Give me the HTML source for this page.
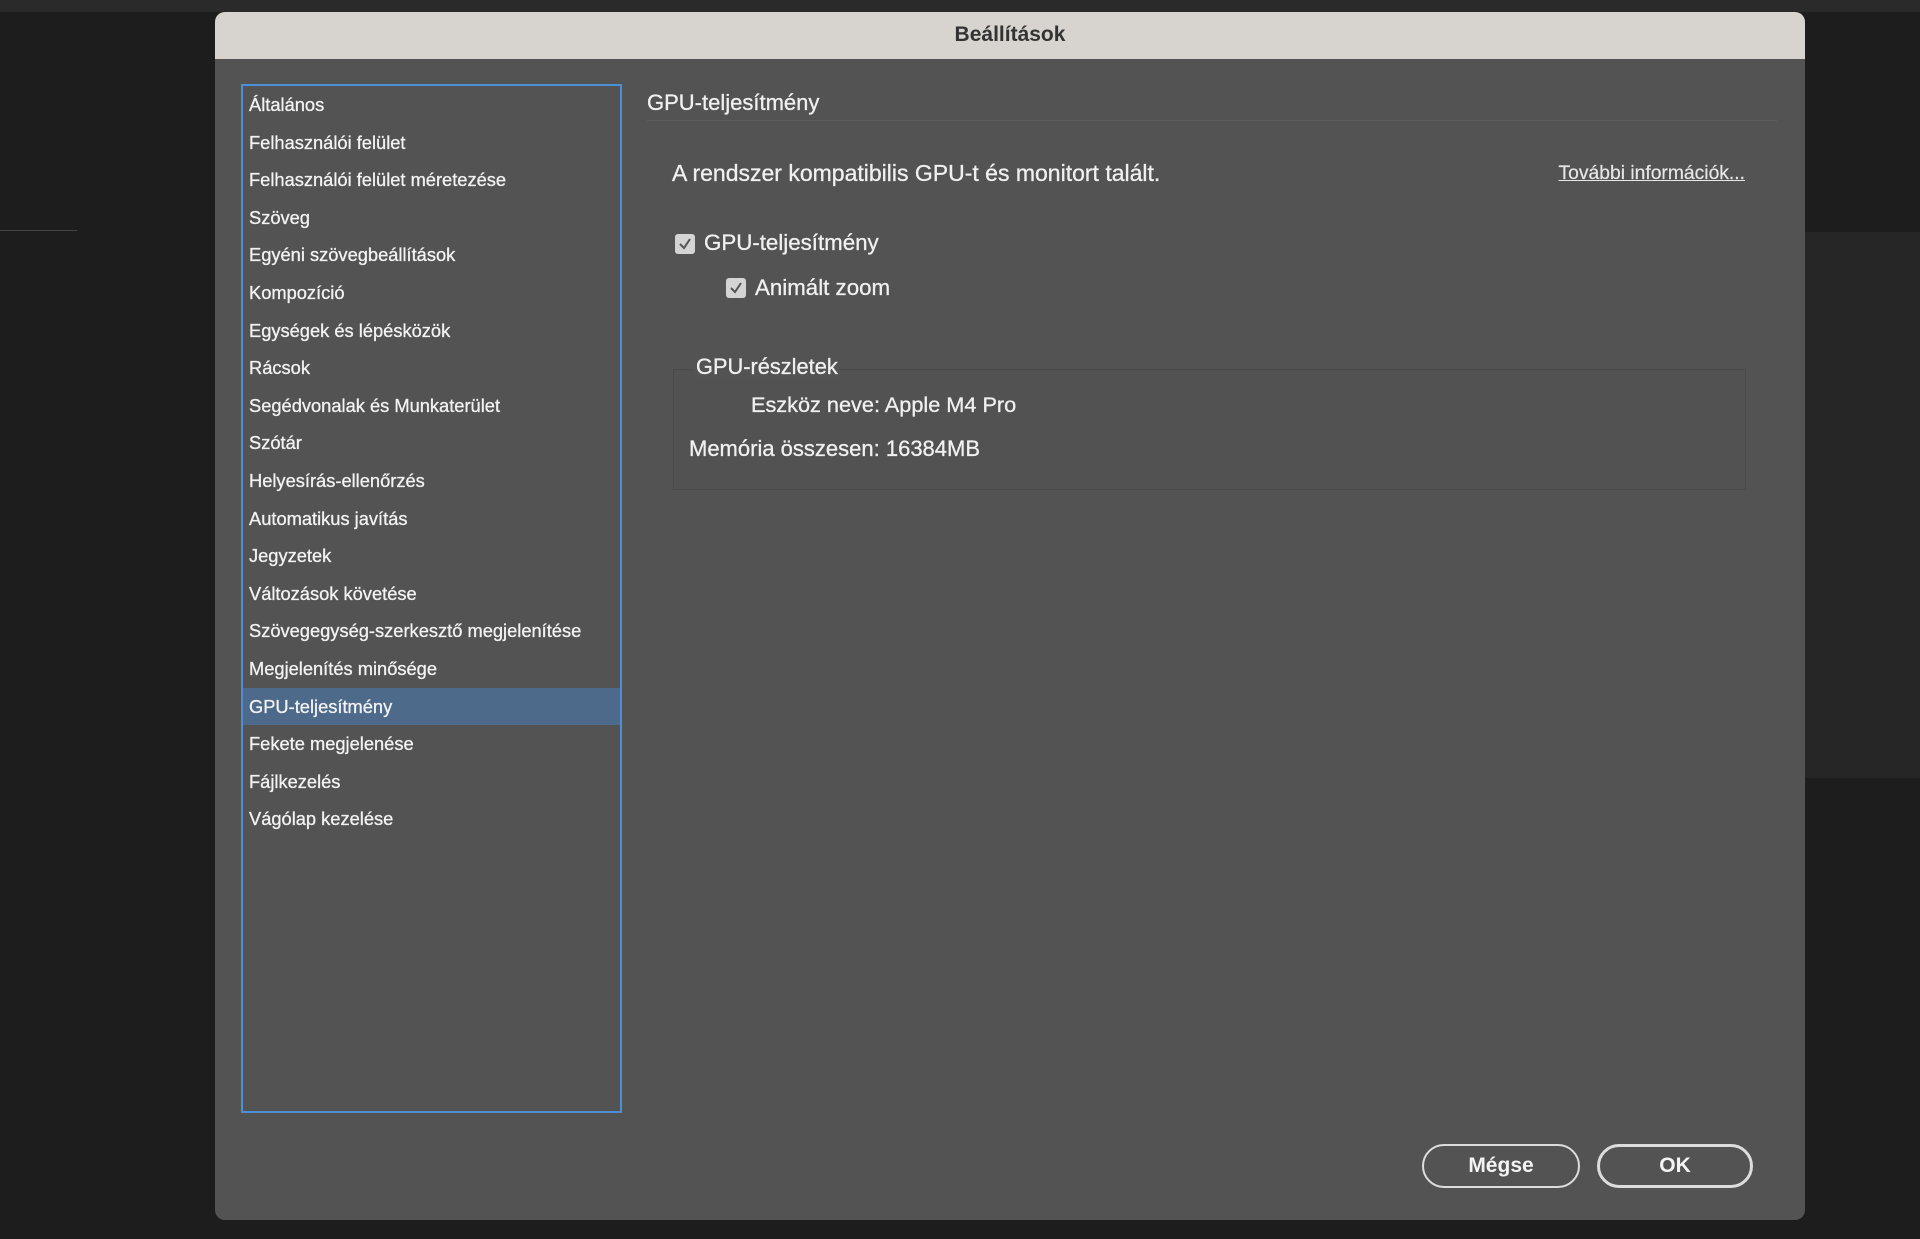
<!DOCTYPE html>
<html><head><meta charset="utf-8">
<style>
*{margin:0;padding:0;box-sizing:border-box}
body{width:1920px;height:1239px;background:#1d1d1d;font-family:"Liberation Sans",sans-serif;position:relative;overflow:hidden;color:#f0f0f0}
.abs{position:absolute}
.dlg{left:215px;top:12px;width:1590px;height:1208px;background:#535353;border-radius:10px;overflow:hidden}
.title{left:0;top:0;width:1590px;height:47px;background:#d7d3ce;color:#333;font-weight:bold;font-size:21px;text-align:center;line-height:46px}
.list{left:26px;top:72px;width:381px;height:1029px;border:2px solid #4d8fd6}
.item{position:absolute;left:0;width:377px;height:37px;line-height:37px;padding-left:6px;font-size:18.3px;color:#f2f2f2;-webkit-text-stroke:0.3px #f2f2f2}
.sel{background:#4d6a8a}
.t{position:absolute;white-space:nowrap;-webkit-text-stroke:0.3px #f0f0f0}
.cb{position:absolute;width:20px;height:20px;background:#d4d4d4;border-radius:3px}
.btn{position:absolute;top:1132px;height:44px;border:2px solid #ddd;border-radius:22px;text-align:center;line-height:40px;font-size:21px;font-weight:bold;color:#f4f4f4}
</style></head><body>
<div class="abs" style="left:0;top:0;width:1920px;height:12px;background:#2a2a2a"></div>
<div class="abs" style="left:0;top:230px;width:77px;height:1px;background:#444"></div>
<div class="abs" style="left:1805px;top:232px;width:115px;height:546px;background:#262626"></div>
<div class="abs dlg">
<div class="abs title">Beállítások</div>
<div class="abs list">
<div class="item" style="top:0">Általános</div>
<div class="item" style="top:37.6px">Felhasználói felület</div>
<div class="item" style="top:75.2px">Felhasználói felület méretezése</div>
<div class="item" style="top:112.8px">Szöveg</div>
<div class="item" style="top:150.4px">Egyéni szövegbeállítások</div>
<div class="item" style="top:188px">Kompozíció</div>
<div class="item" style="top:225.6px">Egységek és lépésközök</div>
<div class="item" style="top:263.2px">Rácsok</div>
<div class="item" style="top:300.8px">Segédvonalak és Munkaterület</div>
<div class="item" style="top:338.4px">Szótár</div>
<div class="item" style="top:376px">Helyesírás-ellenőrzés</div>
<div class="item" style="top:413.6px">Automatikus javítás</div>
<div class="item" style="top:451.2px">Jegyzetek</div>
<div class="item" style="top:488.8px">Változások követése</div>
<div class="item" style="top:526.4px">Szövegegység-szerkesztő megjelenítése</div>
<div class="item" style="top:564px">Megjelenítés minősége</div>
<div class="item sel" style="top:601.6px">GPU-teljesítmény</div>
<div class="item" style="top:639.2px">Fekete megjelenése</div>
<div class="item" style="top:676.8px">Fájlkezelés</div>
<div class="item" style="top:714.4px">Vágólap kezelése</div>
</div>
<div class="t" style="left:432px;top:78px;font-size:22px">GPU-teljesítmény</div>
<div class="abs" style="left:432px;top:108px;width:1130px;height:1px;background:#5c5c5c"></div>
<div class="t" style="left:457px;top:148px;font-size:23px">A rendszer kompatibilis GPU-t és monitort talált.</div>
<div class="t" style="right:60px;top:151px;font-size:19.3px;text-decoration:underline;color:#e6e6e6;-webkit-text-stroke:0.2px #e6e6e6">További információk...</div>
<div class="cb" style="left:460px;top:222px"><svg width="20" height="20"><path d="M5 10l4 4 6-9" stroke="#555" stroke-width="2" fill="none"/></svg></div>
<div class="t" style="left:489px;top:218px;font-size:22.3px">GPU-teljesítmény</div>
<div class="cb" style="left:511px;top:266px"><svg width="20" height="20"><path d="M5 10l4 4 6-9" stroke="#555" stroke-width="2" fill="none"/></svg></div>
<div class="t" style="left:540px;top:263px;font-size:22.3px">Animált zoom</div>
<div class="abs" style="left:458px;top:357px;width:1073px;height:121px;border:1px solid #4b4b4b;background:#525252"></div>
<div class="t" style="left:479px;top:342px;font-size:21.8px;background:#535353;padding:0 2px">GPU-részletek</div>
<div class="t" style="left:536px;top:380px;font-size:21.7px">Eszköz neve: Apple M4 Pro</div>
<div class="t" style="left:474px;top:424px;font-size:22px">Memória összesen: 16384MB</div>
<div class="btn" style="left:1207px;width:158px">Mégse</div>
<div class="btn" style="left:1382px;width:156px;border-width:3px;line-height:38px">OK</div>
</div>
</body></html>
